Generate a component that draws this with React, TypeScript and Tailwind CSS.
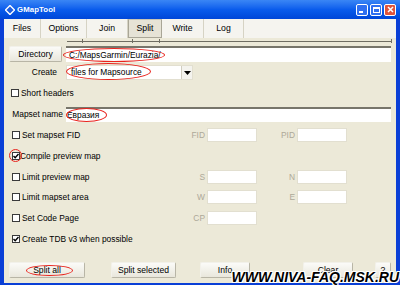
import React from "react";

const font = { fontFamily: '"Liberation Sans", Arial, sans-serif' };

const Check = ({ checked = false }: { checked?: boolean }) => (
  <span className="w-[8px] h-[8px] border border-[#3a3a3a] bg-white flex items-center justify-center shrink-0">
    {checked && (
      <svg width="6" height="6" viewBox="0 0 6 6">
        <path d="M0.5 3 L2.2 4.8 L5.5 1" stroke="#000" strokeWidth="1.4" fill="none" />
      </svg>
    )}
  </span>
);

const Edit = ({ w = "w-[50px]" }: { w?: string }) => (
  <div className={`${w} h-[14px] bg-white border border-[#e2dfd0]`} />
);

const Btn = ({ label, className }: { label: string; className: string }) => (
  <div
    className={`h-[16px] flex items-center justify-center text-[8.6px] rounded-[2px] border border-[#b8b5a6] border-t-[#f2f1ea] border-l-[#f2f1ea] bg-gradient-to-b from-[#fbfbf8] to-[#e9e7dc] text-black ${className}`}
  >
    {label}
  </div>
);

const Ellipse = ({ className }: { className: string }) => (
  <span className={`absolute rounded-[50%] border border-[#e8231d] pointer-events-none ${className}`} />
);

const tabs = [
  { t: "Files", w: "w-[37px]" },
  { t: "Options", w: "w-[46px]" },
  { t: "Join", w: "w-[41px]" },
  { t: "Split", w: "w-[34px]", sel: true },
  { t: "Write", w: "w-[42px]" },
  { t: "Log", w: "w-[40px]" },
];

export default function App() {
  return (
    <div
      className="w-[400px] h-[285px] overflow-hidden relative bg-[#0a3fd6] flex flex-col text-[8.4px] leading-none text-black"
      style={font}
    >
      {/* title bar */}
      <div className="h-[19px] shrink-0 flex items-center bg-gradient-to-b from-[#3a86f5] via-[#0a5cec] to-[#0046d8] pl-[5px] pr-[4px]">
        <svg width="10" height="10" viewBox="0 0 10 10" className="mr-[2px]">
          <path d="M5 0.5 L9.5 5 L5 9.5 L0.5 5 Z" fill="#1f5fe0" stroke="#fff" strokeWidth="1.4" />
        </svg>
        <span className="text-white font-bold text-[7.8px] tracking-[0.1px]">GMapTool</span>
        <div className="ml-auto flex gap-[2px]">
          <div className="w-[12px] h-[12px] rounded-[2px] border border-white bg-[#2f6ff0] relative">
            <span className="absolute left-[2px] bottom-[2px] w-[4px] h-[2px] bg-white" />
          </div>
          <div className="w-[12px] h-[12px] rounded-[2px] border border-white bg-[#2f6ff0] flex items-center justify-center">
            <span className="w-[7px] h-[6px] border border-white border-t-2" />
          </div>
          <div className="w-[12px] h-[12px] rounded-[2px] border border-white bg-[#e0533a] flex items-center justify-center">
            <svg width="7" height="7" viewBox="0 0 7 7">
              <path d="M1 1 L6 6 M6 1 L1 6" stroke="#fff" strokeWidth="1.5" />
            </svg>
          </div>
        </div>
      </div>

      {/* client area */}
      <div className="flex-1 mx-[4px] mb-[2px] bg-[#ece9d8] flex flex-col relative">
        {/* tabs */}
        <div className="h-[19px] shrink-0 bg-[#f5f4ef] flex text-[8.7px]">
          {tabs.map((t) => (
            <div
              key={t.t}
              className={`${t.w} h-[19px] flex items-center justify-center ${
                t.sel
                  ? "bg-[#e6e3d6] border border-[#a9a697] border-t-[#c7c4b5]"
                  : "border-r border-[#d6d3c4]"
              }`}
            >
              {t.t}
            </div>
          ))}
        </div>

        {/* ruler */}
        <div className="h-[8px] shrink-0 relative">
          <div className="absolute left-[63px] right-[4px] top-[3px] h-[1px] bg-[#6f6d62]" />
          <div className="absolute left-[78px] top-[1px] w-[1px] h-[4px] bg-[#6f6d62]" />
          <div className="absolute left-[128px] top-[1px] w-[1px] h-[4px] bg-[#6f6d62]" />
          <div className="absolute left-[155px] top-[1px] w-[1px] h-[4px] bg-[#6f6d62]" />
          <div className="absolute right-[4px] top-[1px] w-[1px] h-[4px] bg-[#6f6d62]" />
        </div>

        {/* directory */}
        <div className="h-[16px] shrink-0 flex items-center pl-[5px]">
          <Btn label="Directory" className="w-[53px] h-[14px]" />
          <div className="ml-[4px] w-[325px] h-[16px] bg-white border-t-2 border-[#77756a] flex items-center pl-[3px] relative">
            C:/MapsGarmin/Eurazia/
            <Ellipse className="-left-[3px] top-[0px] w-[102px] h-[14px]" />
          </div>
        </div>

        {/* create */}
        <div className="h-[15px] mt-[3px] shrink-0 flex items-center">
          <span className="w-[53px] text-right">Create</span>
          <div className="ml-[9px] w-[127px] h-[15px] bg-white border border-[#e2dfd0] flex items-center pl-[4px] relative">
            files for Mapsource
            <div className="ml-auto w-[11px] h-[13px] flex items-center justify-center bg-[#f4f3ee] border-l border-[#d0cdbf]">
              <svg width="7" height="4" viewBox="0 0 7 4">
                <path d="M0 0 L7 0 L3.5 4 Z" fill="#000" />
              </svg>
            </div>
            <Ellipse className="-left-[1px] -top-[3px] w-[85px] h-[17px]" />
          </div>
        </div>

        {/* short headers */}
        <div className="h-[10px] mt-[8px] shrink-0 flex items-center pl-[7px] gap-[2px]">
          <Check />
          <span>Short headers</span>
        </div>

        {/* mapset name */}
        <div className="h-[15px] mt-[9px] shrink-0 flex items-center">
          <span className="w-[59px] text-right">Mapset name</span>
          <div className="ml-[3px] w-[325px] h-[15px] bg-white border-t-2 border-[#77756a] flex items-center pl-[1px] relative">
            Евразия
            <Ellipse className="left-[0px] -top-[1px] w-[41px] h-[14px]" />
          </div>
        </div>

        {/* set mapset FID */}
        <div className="h-[14px] mt-[6px] shrink-0 flex items-center">
          <div className="w-[184px] flex items-center pl-[8px] gap-[2px]">
            <Check />
            <span>Set mapset FID</span>
          </div>
          <span className="w-[17px] text-right text-[#aca899]">FID</span>
          <div className="ml-[2px]"><Edit /></div>
          <span className="w-[38px] text-right text-[#aca899]">PID</span>
          <div className="ml-[2px]"><Edit /></div>
        </div>

        {/* compile preview */}
        <div className="h-[14px] mt-[7px] shrink-0 flex items-center pl-[8px]">
          <span className="relative">
            <Check checked />
            <Ellipse className="-left-[3px] -top-[3px] w-[13px] h-[13px]" />
          </span>
          <span>Compile preview map</span>
        </div>

        {/* limit preview */}
        <div className="h-[14px] mt-[7px] shrink-0 flex items-center">
          <div className="w-[184px] flex items-center pl-[8px] gap-[2px]">
            <Check />
            <span>Limit preview map</span>
          </div>
          <span className="w-[17px] text-right text-[#aca899]">S</span>
          <div className="ml-[2px]"><Edit /></div>
          <span className="w-[38px] text-right text-[#aca899]">N</span>
          <div className="ml-[2px]"><Edit /></div>
        </div>

        {/* limit mapset area */}
        <div className="h-[14px] mt-[6px] shrink-0 flex items-center">
          <div className="w-[184px] flex items-center pl-[8px] gap-[2px]">
            <Check />
            <span>Limit mapset area</span>
          </div>
          <span className="w-[17px] text-right text-[#aca899]">W</span>
          <div className="ml-[2px]"><Edit /></div>
          <span className="w-[38px] text-right text-[#aca899]">E</span>
          <div className="ml-[2px]"><Edit /></div>
        </div>

        {/* code page */}
        <div className="h-[14px] mt-[7px] shrink-0 flex items-center">
          <div className="w-[184px] flex items-center pl-[8px] gap-[2px]">
            <Check />
            <span>Set Code Page</span>
          </div>
          <span className="w-[17px] text-right text-[#aca899]">CP</span>
          <div className="ml-[2px]"><Edit /></div>
        </div>

        {/* tdb */}
        <div className="h-[14px] mt-[7px] shrink-0 flex items-center pl-[8px] gap-[2px]">
          <Check checked />
          <span>Create TDB v3 when possible</span>
        </div>

        {/* buttons */}
        <div className="h-[16px] mt-[16px] shrink-0 flex items-center pl-[5px]">
          <div className="relative">
            <Btn label="Split all" className="w-[76px]" />
            <Ellipse className="left-[17px] top-[3px] w-[47px] h-[11px]" />
          </div>
          <Btn label="Split selected" className="ml-[26px] w-[65px]" />
          <Btn label="Info" className="ml-[24px] w-[50px]" />
          <Btn label="Clear" className="ml-[53px] w-[50px]" />
          <Btn label="?" className="ml-[22px] w-[16px]" />
        </div>
      </div>

      {/* watermark */}
      <div
        className="absolute right-[1px] bottom-[1px] text-[14px] font-bold italic text-black leading-none"
        style={{
          textShadow:
            "1px 0 0 #fff, -1px 0 0 #fff, 0 1px 0 #fff, 0 -1px 0 #fff, 1px 1px 0 #fff, -1px -1px 0 #fff, 1px -1px 0 #fff, -1px 1px 0 #fff",
        }}
      >
        WWW.NIVA-FAQ.MSK.RU
      </div>
    </div>
  );
}
